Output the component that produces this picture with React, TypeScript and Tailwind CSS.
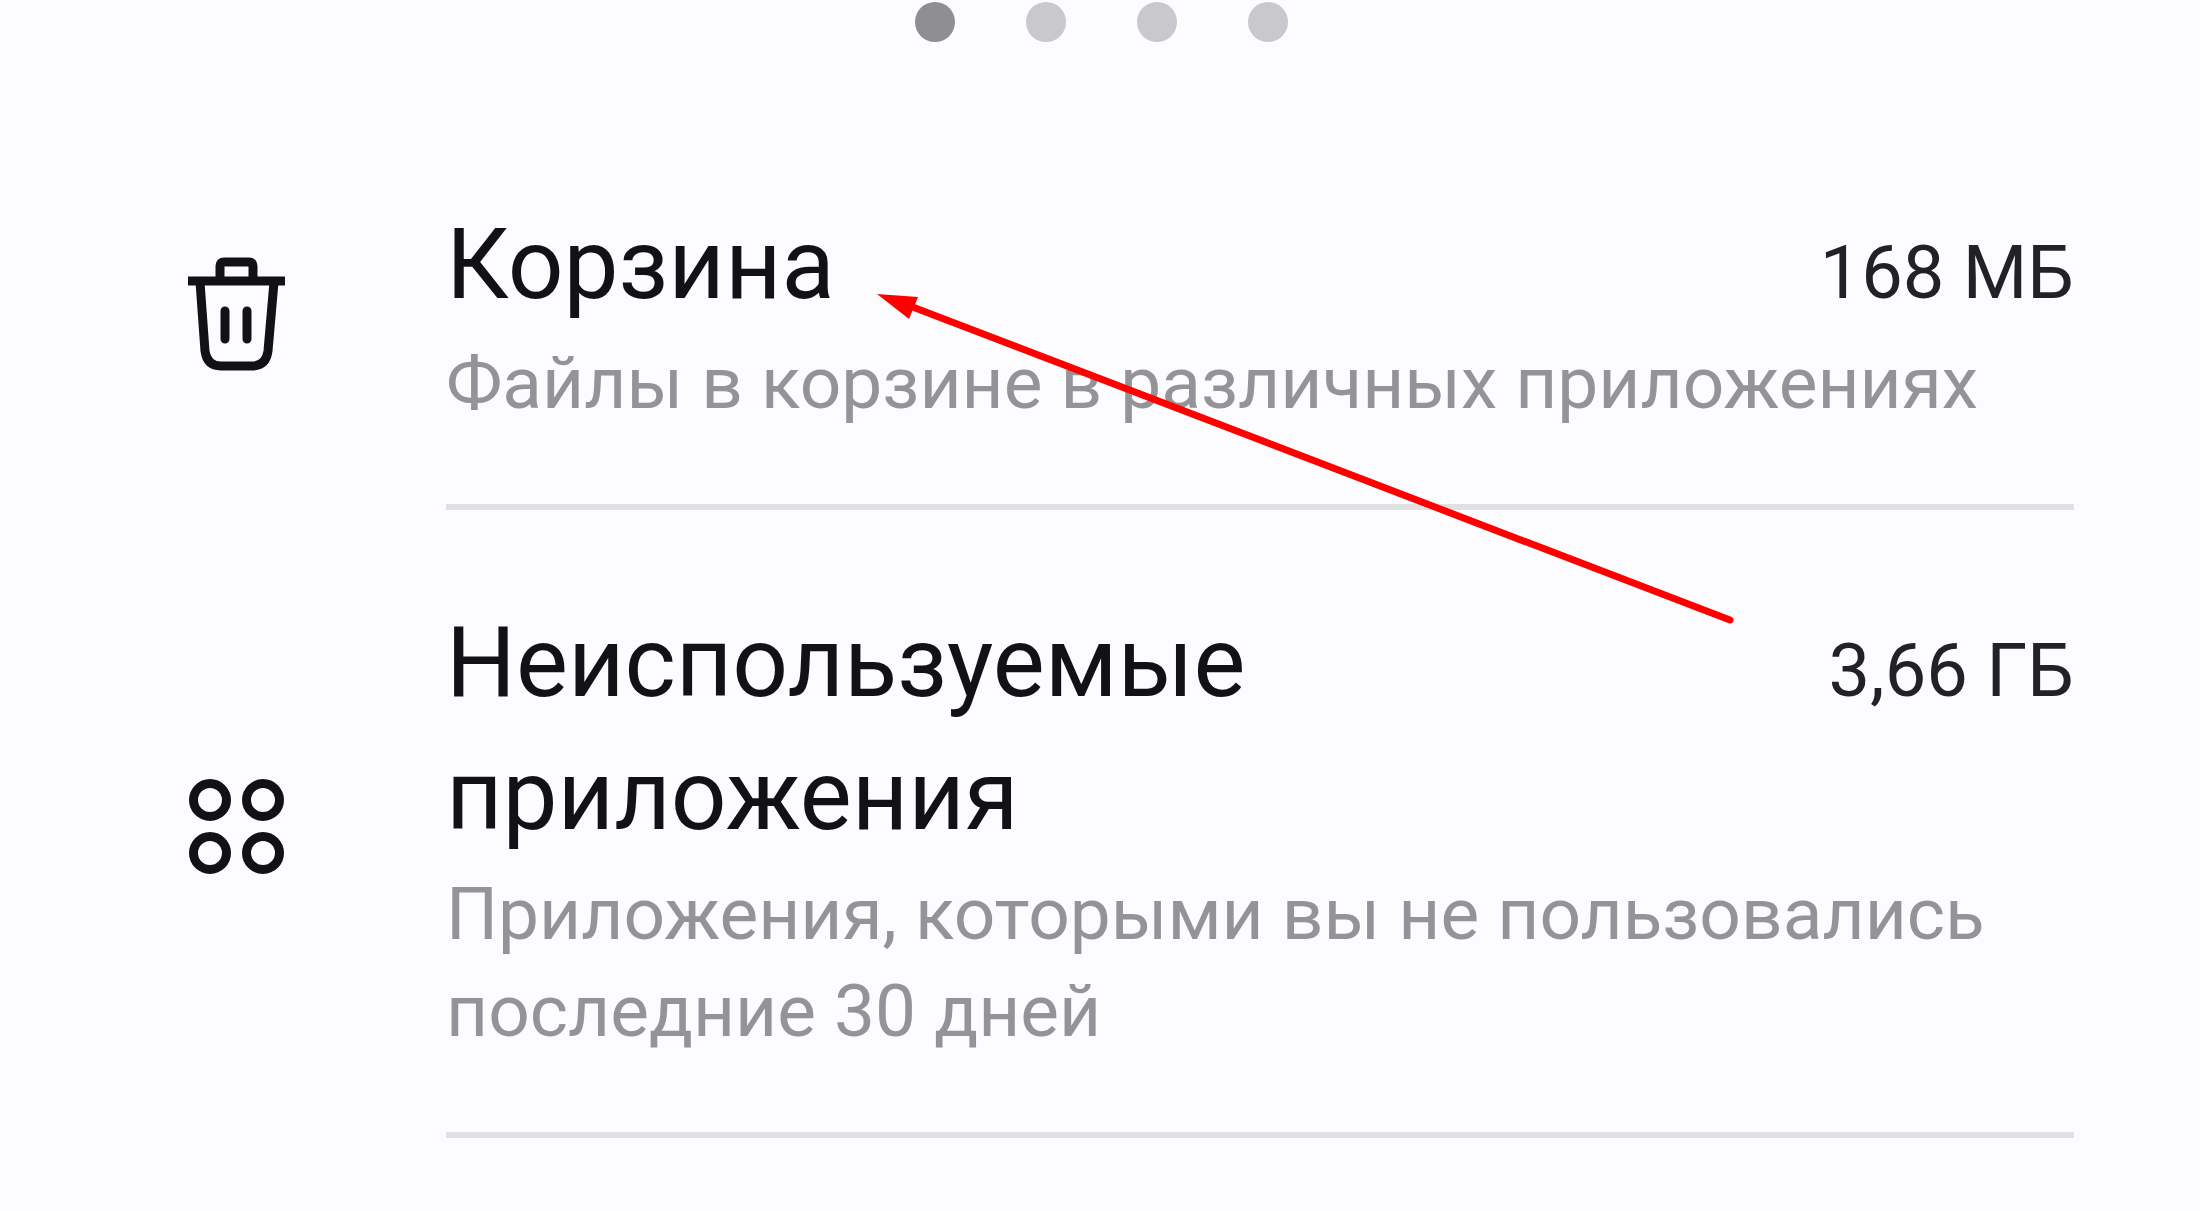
import type { ReactNode } from "react";

function TrashIcon() {
  return (
    <svg viewBox="0 0 100 116" className="w-[100px] shrink-0" fill="none" stroke="currentColor" strokeWidth="9" aria-hidden="true">
      <path d="M2 24H99" />
      <path d="M34 23V9q0-4 4-4H63q4 0 4 4V23" />
      <path d="M14 25L19 94Q21 109 35 109H66Q80 109 82 94L88 25" />
      <path d="M39 54V82M61 54V82" strokeLinecap="round" />
    </svg>
  );
}

function AppsIcon() {
  return (
    <svg viewBox="0 0 100 100" className="w-[100px] shrink-0" fill="none" stroke="currentColor" strokeWidth="9" aria-hidden="true">
      <circle cx="24" cy="22" r="16.5" />
      <circle cx="77" cy="22" r="16.5" />
      <circle cx="24" cy="75" r="16.5" />
      <circle cx="77" cy="75" r="16.5" />
    </svg>
  );
}

type RowProps = { icon: ReactNode; title: string; size: string; note: string };

function StorageRow({ icon, title, size, note }: RowProps) {
  return (
    <li>
      <button type="button" className="flex w-full items-center gap-40 pt-[86px] pb-[72px] text-left">
        {icon}
        <span className="flex min-w-0 flex-1 flex-col gap-1">
          <span className="flex items-baseline justify-between gap-20">
            <span className="text-[98px] leading-[133px]">{title}</span>
            <span className="shrink-0 text-[74px] leading-[97px] text-[#222224]">{size}</span>
          </span>
          <span className="text-[73px] leading-[97px] text-[#949498]">{note}</span>
        </span>
      </button>
      <hr className="ml-[260px] border-t-6 border-[#e1e1e4]" />
    </li>
  );
}

export default function App() {
  return (
    <main className="relative min-h-screen overflow-hidden bg-[#fcfcfe] pt-0.5 pr-[126px] pl-[186px] font-[Roboto,sans-serif] text-[#121214]">
      <nav aria-label="Страницы" className="-mr-[126px] -ml-[184px] flex justify-center gap-[71px]">
        <button type="button" aria-label="Страница 1" aria-current="page" className="size-10 rounded-full bg-[#8f8f91]" />
        <button type="button" aria-label="Страница 2" className="size-10 rounded-full bg-[#c9c9cb]" />
        <button type="button" aria-label="Страница 3" className="size-10 rounded-full bg-[#c9c9cb]" />
        <button type="button" aria-label="Страница 4" className="size-10 rounded-full bg-[#c9c9cb]" />
      </nav>
      <ul className="pt-[70px]">
        <StorageRow icon={<TrashIcon />} title="Корзина" size="168 МБ" note="Файлы в корзине в различных приложениях" />
        <StorageRow
          icon={<AppsIcon />}
          title="Неиспользуемые приложения"
          size="3,66 ГБ"
          note="Приложения, которыми вы не пользовались последние 30 дней"
        />
      </ul>
      <svg viewBox="0 0 860 332" className="pointer-events-none absolute top-[292px] left-[876px] w-[860px]" aria-hidden="true">
        <path d="M34 14L854 328" stroke="#ff0000" strokeWidth="7" strokeLinecap="round" />
        <path d="M1 2L42 5L38 15L33 27Z" fill="#ff0000" />
      </svg>
    </main>
  );
}
